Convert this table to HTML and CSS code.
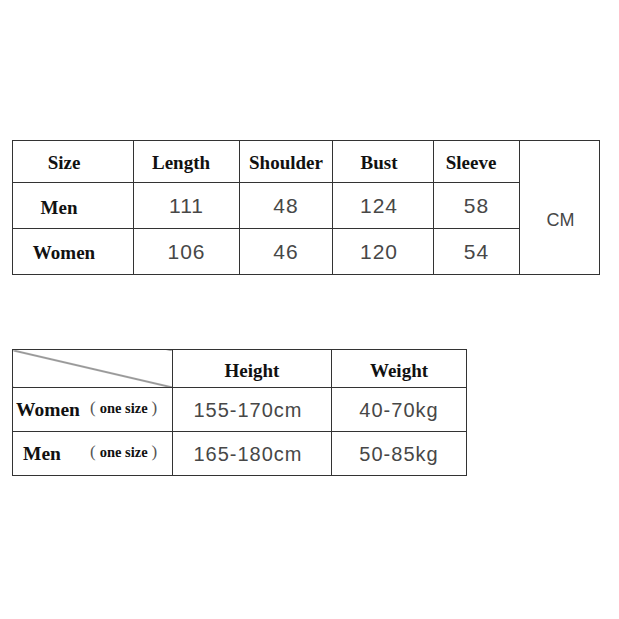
FILE: index.html
```html
<!DOCTYPE html>
<html>
<head>
<meta charset="utf-8">
<link rel="stylesheet" href="styles.css">
</head>
<body>
<div class="page">
  <table class="size-table">
    <colgroup>
      <col class="c1"><col class="c2"><col class="c3"><col class="c4"><col class="c5"><col class="c6">
    </colgroup>
    <tr class="r-head">
      <th class="label">Size</th>
      <th class="shift-l2">Length</th>
      <th>Shoulder</th>
      <th class="shift-l">Bust</th>
      <th class="shift-l2">Sleeve</th>
      <td class="unit" rowspan="3">CM</td>
    </tr>
    <tr class="r-body">
      <th class="label men">Men</th>
      <td>111</td>
      <td>48</td>
      <td class="shift-l">124</td>
      <td>58</td>
    </tr>
    <tr class="r-body">
      <th class="label">Women</th>
      <td>106</td>
      <td>46</td>
      <td class="shift-l">120</td>
      <td>54</td>
    </tr>
  </table>

  <table class="fit-table">
    <colgroup>
      <col class="f1"><col class="f2"><col class="f3">
    </colgroup>
    <tr class="f-head">
      <td class="diag"></td>
      <th>Height</th>
      <th>Weight</th>
    </tr>
    <tr class="f-body">
      <th class="who"><span class="name">Women</span><span class="note"><span class="paren">(</span>one size<span class="paren">)</span></span></th>
      <td class="shift-l">155-170cm</td>
      <td>40-70kg</td>
    </tr>
    <tr class="f-body">
      <th class="who"><span class="name name-men">Men</span><span class="note"><span class="paren">(</span>one size<span class="paren">)</span></span></th>
      <td class="shift-l">165-180cm</td>
      <td>50-85kg</td>
    </tr>
  </table>
</div>
</body>
</html>
```

FILE: styles.css
```css
html, body {
  margin: 0;
  padding: 0;
  background: #ffffff;
}

.page {
  width: 619px;
  height: 619px;
  padding: 140px 0 0 12px;
  box-sizing: border-box;
}

table {
  border-collapse: collapse;
  table-layout: fixed;
}

td, th {
  border: 1px solid #333333;
  padding: 0;
  text-align: center;
  vertical-align: middle;
}

th {
  font-family: "Liberation Serif", "Times New Roman", serif;
  font-weight: bold;
  font-size: 19px;
  color: #111111;
}

td {
  font-family: "Liberation Sans", Arial, sans-serif;
  font-size: 21px;
  color: #474747;
  letter-spacing: 1px;
}

/* size table */
.size-table {
  width: 588px;
}
.c1 { width: 121px; }
.c2 { width: 106px; }
.c3 { width: 93px; }
.c4 { width: 101px; }
.c5 { width: 86px; }
.c6 { width: 80px; }

.size-table .r-head { height: 42px; }
.size-table .r-body { height: 46px; }

.size-table .r-head th {
  padding-top: 2px;
}

.size-table .label {
  padding-right: 18px;
}
.size-table .label.men {
  padding-right: 28px;
  padding-top: 4px;
}
.size-table .r-body th {
  padding-top: 3px;
}

.shift-l {
  padding-right: 8px;
}

.shift-l2 {
  padding-right: 11px;
}

.unit {
  font-size: 18px;
  letter-spacing: 0;
  padding-top: 26px;
  padding-left: 2px;
}

/* fit table */
.fit-table {
  margin-top: 74px;
  width: 455px;
}
.f1 { width: 160px; }
.f2 { width: 159px; }
.f3 { width: 135px; }

.fit-table .f-head { height: 38px; }
.fit-table .f-body { height: 44px; }

.fit-table .f-head th {
  padding-top: 4px;
}

.fit-table td {
  font-size: 20px;
  padding-top: 2px;
}

.diag {
  background: linear-gradient(to top right, transparent calc(50% - 1px), #3a3a3a 50%, transparent calc(50% + 1px));
}

.who {
  text-align: left;
  padding-left: 3px;
  white-space: nowrap;
}

.name {
  display: inline-block;
  width: 70px;
  font-size: 19.5px;
}

.name-men {
  padding-left: 7px;
  width: 63px;
}

.note {
  font-size: 14.5px;
  position: relative;
  top: -3px;
}

.paren {
  font-weight: normal;
  font-size: 17px;
  color: #555555;
  margin: 0 4px;
}
```
